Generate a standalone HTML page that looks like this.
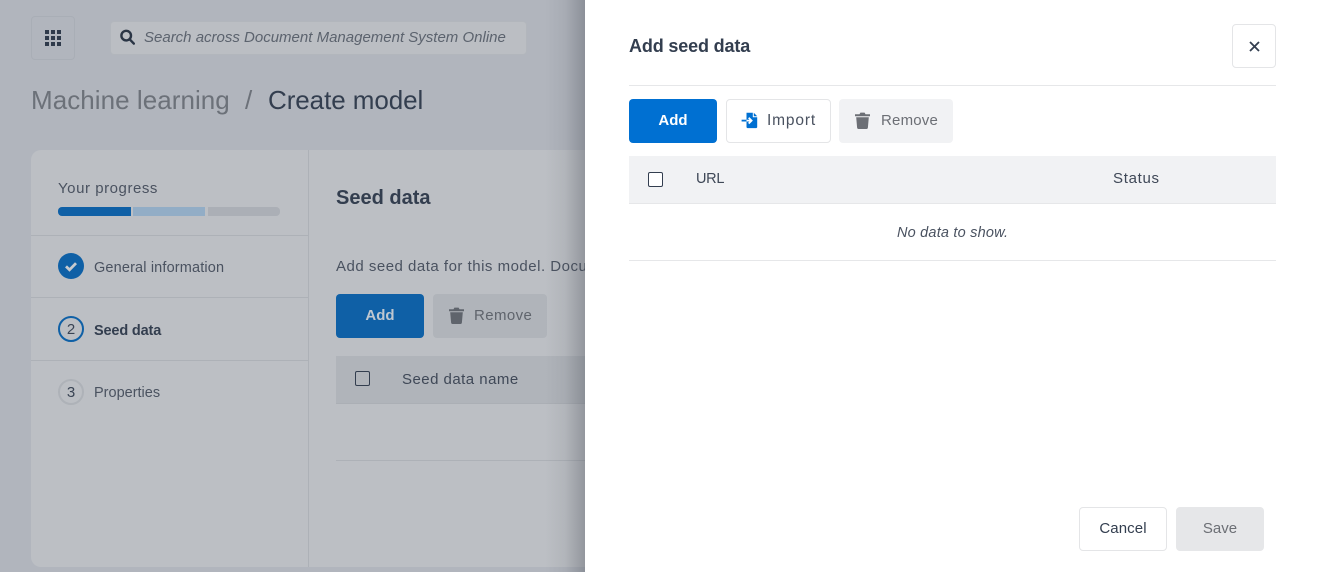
<!DOCTYPE html>
<html><head><meta charset="utf-8">
<style>
*{box-sizing:border-box}
html,body{margin:0;padding:0;width:1319px;height:572px;overflow:hidden;background:#b1b5bd}
body{position:relative;font-family:"Liberation Sans",Arial,sans-serif;color:#333e4f}
.a{position:absolute}
.t{position:absolute;white-space:nowrap;font-size:14.5px;line-height:20px}
.btn{position:absolute;border-radius:4px}
</style></head><body>
<!-- background -->
<div class="a" style="left:31px;top:16px;width:44px;height:44px;border:1px solid #a9aeb6;border-radius:4px"></div>
<svg class="a" style="left:45px;top:30px" width="16" height="16" viewBox="0 0 16 16" fill="#2f3a4b"><rect x="0" y="0" width="4" height="4"/><rect x="6" y="0" width="4" height="4"/><rect x="12" y="0" width="4" height="4"/><rect x="0" y="6" width="4" height="4"/><rect x="6" y="6" width="4" height="4"/><rect x="12" y="6" width="4" height="4"/><rect x="0" y="12" width="4" height="4"/><rect x="6" y="12" width="4" height="4"/><rect x="12" y="12" width="4" height="4"/></svg>
<div class="a" style="left:110px;top:21px;width:417px;height:34px;background:#bbbec3;border:1px solid #b2b6bc;border-radius:4px"></div>
<svg class="a" style="left:120px;top:29px" width="15" height="16" viewBox="0 0 15 16" fill="none" stroke="#2a3545" stroke-width="2.4"><circle cx="6.2" cy="6.6" r="4.8"/><path d="M9.8 10.4l4 4.2" stroke-linecap="round"/></svg>
<div class="t" style="left:144px;top:28px;font-style:italic;color:#5c636e;font-size:15px">Search across Document Management System Online</div>
<div class="t" style="left:31px;top:84px;font-size:26px;line-height:32px;color:#6c7179;letter-spacing:.05px">Machine learning</div>
<div class="t" style="left:245px;top:84px;font-size:26px;line-height:32px;color:#6c7179">/</div>
<div class="t" style="left:268px;top:84px;font-size:26px;line-height:32px;color:#333e4f;letter-spacing:-.07px">Create model</div>

<div class="a" style="left:31px;top:150px;width:600px;height:417px;background:#bcbfc4;border-radius:10px 0 0 10px"></div>
<div class="a" style="left:308px;top:150px;width:1px;height:417px;background:#adb1b7"></div>
<div class="t" style="left:58px;top:179px;color:#4a5260;font-size:15px;letter-spacing:.55px">Your progress</div>
<div class="a" style="left:58px;top:207px;width:73px;height:9px;background:#0f60a6;border-radius:4px 0 0 4px"></div>
<div class="a" style="left:133px;top:207px;width:72px;height:9px;background:#92adc6"></div>
<div class="a" style="left:208px;top:207px;width:72px;height:9px;background:#abafb6;border-radius:0 4px 4px 0"></div>
<div class="a" style="left:31px;top:235px;width:277px;height:1px;background:#adb1b7"></div>
<div class="a" style="left:31px;top:297px;width:277px;height:1px;background:#adb1b7"></div>
<div class="a" style="left:31px;top:360px;width:277px;height:1px;background:#adb1b7"></div>
<svg class="a" style="left:58px;top:253px" width="26" height="26" viewBox="0 0 26 26"><circle cx="13" cy="13" r="13" fill="#0f60a6"/><path d="M8 13.4l3.5 3.4 6.5-6.6" fill="none" stroke="#c6cacf" stroke-width="2.8"/></svg>
<div class="t" style="left:94px;top:258px;color:#4a5260;letter-spacing:.15px">General information</div>
<div class="a" style="left:58px;top:316px;width:26px;height:26px;border:2px solid #0f60a6;border-radius:50%;text-align:center;font-size:15px;line-height:24px;color:#3a4454">2</div>
<div class="t" style="left:94px;top:321px;font-weight:bold;color:#333e4f;letter-spacing:-.15px">Seed data</div>
<div class="a" style="left:58px;top:379px;width:26px;height:26px;border:2px solid #aeb2b8;border-radius:50%;text-align:center;font-size:15px;line-height:24px;color:#3a4454">3</div>
<div class="t" style="left:94px;top:383px;color:#4a5260">Properties</div>

<div class="t" style="left:336px;top:186px;font-weight:bold;font-size:20px;line-height:24px;color:#333e4f">Seed data</div>
<div class="t" style="left:336px;top:257px;color:#4a5260;font-size:15px;letter-spacing:.5px">Add seed data for this model. Documents</div>
<div class="btn" style="left:336px;top:294px;width:88px;height:44px;background:#0f60a6;color:#bfc7d0;font-weight:bold;font-size:15px;line-height:44px;text-align:center">Add</div>
<div class="btn" style="left:433px;top:294px;width:114px;height:44px;background:#b0b4ba"></div>
<svg class="a" style="left:449px;top:307px" width="15" height="17" viewBox="0 0 15 17" fill="#5f646c"><path d="M0 2.2h4.500L5.400 .6h4.200l.9 1.600H15v2H0zM1.200 5.200h12.600l-.9 10.400c-.1.800-.6 1.400-1.400 1.400H3.500c-.8 0-1.300-.6-1.400-1.400z"/></svg>
<div class="t" style="left:474px;top:306px;color:#5f646c;font-size:15px;letter-spacing:.4px">Remove</div>
<div class="a" style="left:336px;top:356px;width:250px;height:48px;background:#b0b4ba;border-bottom:1px solid #abafb5"></div>
<div class="a" style="left:355px;top:371px;width:15px;height:15px;border:1.5px solid #333e4f;border-radius:2px"></div>
<div class="t" style="left:402px;top:370px;color:#3f4857;font-size:15px;letter-spacing:.47px">Seed data name</div>
<div class="a" style="left:336px;top:460px;width:250px;height:1px;background:#adb1b7"></div>

<!-- shadow -->
<div class="a" style="left:545px;top:0;width:40px;height:572px;background:linear-gradient(to right,rgba(60,65,75,0),rgba(60,65,75,.08) 50%,rgba(60,65,75,.32))"></div>

<!-- drawer -->
<div class="a" style="left:585px;top:0;width:734px;height:572px;background:#fff"></div>
<div class="t" style="left:629px;top:34px;font-weight:bold;font-size:18px;line-height:24px;color:#333e4f;letter-spacing:-.15px">Add seed data</div>
<div class="btn" style="left:1232px;top:24px;width:44px;height:44px;background:#fff;border:1px solid #e4e5e7"></div>
<svg class="a" style="left:1249px;top:41px" width="11" height="11" viewBox="0 0 11 11"><path d="M1 1l9 9M10 1l-9 9" stroke="#333e4f" stroke-width="1.800" fill="none"/></svg>
<div class="a" style="left:629px;top:85px;width:647px;height:1px;background:#e6e7e9"></div>

<div class="btn" style="left:629px;top:99px;width:88px;height:44px;background:#0070d2;color:#fff;font-weight:bold;font-size:15px;line-height:44px;text-align:center">Add</div>
<div class="btn" style="left:726px;top:99px;width:105px;height:44px;background:#fff;border:1px solid #e4e5e7"></div>
<svg class="a" style="left:741px;top:112px" width="17" height="17" viewBox="0 0 17 17"><path d="M5.500 .8h6.300v4.400h4.400v9.800c0 .6-.5 1.100-1.100 1.100H6.600c-.6 0-1.100-.5-1.100-1.100z" fill="#0070d2"/><path d="M12.800 .8l3.400 3.400h-3.400z" fill="#0070d2"/><path d="M.6 8.600h4.900" stroke="#0070d2" stroke-width="1.800"/><path d="M5.500 8.600h4.800M7.700 5.700l2.900 2.900-2.900 2.900" stroke="#fff" stroke-width="1.800" fill="none"/></svg>
<div class="t" style="left:767px;top:111px;color:#4a5260;font-size:15.500px;letter-spacing:.85px">Import</div>
<div class="btn" style="left:839px;top:99px;width:114px;height:44px;background:#f1f2f4"></div>
<svg class="a" style="left:855px;top:112px" width="15" height="17" viewBox="0 0 15 17" fill="#6c6f75"><path d="M0 2.200h4.500L5.400 .6h4.200l.9 1.600H15v2H0zM1.200 5.200h12.600l-.9 10.400c-.1.800-.6 1.400-1.400 1.400H3.500c-.8 0-1.300-.6-1.400-1.400z"/></svg>
<div class="t" style="left:881px;top:111px;color:#6c6f75;font-size:15px;letter-spacing:.2px">Remove</div>

<div class="a" style="left:629px;top:156px;width:647px;height:48px;background:#f1f2f4;border-bottom:1px solid #e6e7e9"></div>
<div class="a" style="left:648px;top:172px;width:15px;height:15px;background:#fff;border:1.500px solid #333e4f;border-radius:2px"></div>
<div class="t" style="left:696px;top:169px;color:#3f4857;font-size:14.500px;letter-spacing:-.3px">URL</div>
<div class="t" style="left:1113px;top:169px;color:#3f4857;font-size:15px;letter-spacing:.7px">Status</div>
<div class="t" style="left:897px;top:223px;color:#4a5260;font-style:italic;letter-spacing:.2px">No data to show.</div>
<div class="a" style="left:629px;top:260px;width:647px;height:1px;background:#e6e7e9"></div>

<div class="btn" style="left:1079px;top:507px;width:88px;height:44px;background:#fff;border:1px solid #e4e5e7;color:#333e4f;font-size:15px;line-height:41px;text-align:center;letter-spacing:.1px">Cancel</div>
<div class="btn" style="left:1176px;top:507px;width:88px;height:44px;background:#e6e7e9;color:#6c6f75;font-size:15px;line-height:44px;text-align:center">Save</div>
</body></html>
